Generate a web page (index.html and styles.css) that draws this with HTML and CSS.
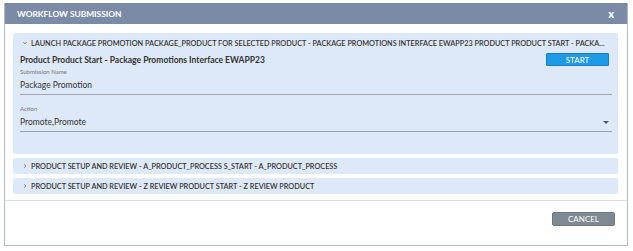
FILE: index.html
```html
<!DOCTYPE html>
<html>
<head>
<meta charset="utf-8">
<link rel="stylesheet" href="styles.css">
</head>
<body>
<div class="dialog">
  <div class="dlg-head">
    <span class="dlg-title">WORKFLOW SUBMISSION</span>
    <span class="dlg-close">x</span>
  </div>
  <div class="dlg-body">
    <div class="panel open">
      <div class="panel-head"><svg class="chev" viewBox="0 0 4 4" width="4" height="4"><path d="M0.5 1.2 L2 2.8 L3.5 1.2" fill="none" stroke="#555" stroke-width="0.8"/></svg><span class="panel-label">LAUNCH PACKAGE PROMOTION PACKAGE_PRODUCT FOR SELECTED PRODUCT - PACKAGE PROMOTIONS INTERFACE EWAPP23 PRODUCT PRODUCT START - PACKA...</span></div>
      <div class="panel-content">
        <div class="row-title">
          <span class="item-title">Product Product Start - Package Promotions Interface EWAPP23</span>
          <button class="btn-start">START</button>
        </div>
        <div class="field">
          <div class="field-label">Submission Name</div>
          <div class="field-value">Package Promotion</div>
        </div>
        <div class="field">
          <div class="field-label">Action</div>
          <div class="field-value select"><span>Promote,Promote</span><span class="caret"></span></div>
        </div>
      </div>
    </div>
    <div class="panel">
      <div class="panel-head"><svg class="chev" viewBox="0 0 4 4" width="4" height="4"><path d="M1.2 0.5 L2.8 2 L1.2 3.5" fill="none" stroke="#555" stroke-width="0.8"/></svg><span class="panel-label">PRODUCT SETUP AND REVIEW - A_PRODUCT_PROCESS S_START - A_PRODUCT_PROCESS</span></div>
    </div>
    <div class="panel">
      <div class="panel-head"><svg class="chev" viewBox="0 0 4 4" width="4" height="4"><path d="M1.2 0.5 L2.8 2 L1.2 3.5" fill="none" stroke="#555" stroke-width="0.8"/></svg><span class="panel-label">PRODUCT SETUP AND REVIEW - Z REVIEW PRODUCT START - Z REVIEW PRODUCT</span></div>
    </div>
  </div>
  <div class="dlg-foot">
    <button class="btn-cancel">CANCEL</button>
  </div>
</div>
</body>
</html>
```

FILE: styles.css
```css
* { box-sizing: border-box; }
html, body { margin: 0; padding: 0; background: #fff; }
body {
  font-family: Lato, "Open Sans", "Liberation Sans", sans-serif;
  color: #333;
  padding: 3px 5px 5px 4px;
}
.dialog {
  width: 624px;
  height: 243px;
  border: 1px solid #b4b8c0;
  border-top: none;
  display: flex;
  flex-direction: column;
  background: #fff;
}
.dlg-head {
  height: 21px;
  flex: none;
  background: #7b8ba7;
  display: flex;
  align-items: center;
  justify-content: space-between;
  padding: 0 13px 0 12px;
  color: #fff;
  font-weight: 700;
}
.dlg-title { font-size: 8.4px; }
.dlg-close { font-size: 11px; font-weight: 900; }
.dlg-body {
  padding: 9px 9px 6px 8px;
  display: flex;
  flex-direction: column;
  gap: 4px;
  border-bottom: 1px solid #dcdcdc;
}
.panel {
  background: #dde8f8;
  border-radius: 2px;
}
.panel-head {
  height: 16px;
  display: flex;
  align-items: center;
  padding-left: 10px;
  font-size: 7.3px;
  font-weight: 600;
  color: #333;
  white-space: nowrap;
  overflow: hidden;
}
.open .panel-head { height: 20px; }
.chev { flex: none; margin-right: 4px; }
.panel-content {
  padding: 0 6px 22px 7px;
}
.row-title {
  display: flex;
  align-items: center;
  justify-content: space-between;
  height: 13px;
}
.item-title { font-size: 8.5px; font-weight: 700; color: #333; }
.btn-start {
  width: 63px;
  height: 13px;
  background: #1e9ae6;
  border: 1px solid #1580c8;
  border-radius: 1px;
  color: #fff;
  font-family: inherit;
  font-size: 8px;
  padding: 0;
  margin-right: 3px;
}
.field { margin-top: 2px; }
.field + .field { margin-top: 10px; }
.field-label { font-size: 6px; color: #777; height: 8px; line-height: 8px; }
.field-value {
  font-size: 8.5px;
  color: #333;
  height: 19px;
  line-height: 14px;
  padding-top: 2px;
  border-bottom: 1px solid #a2a6ac;
}
.select { display: flex; justify-content: space-between; align-items: flex-start; }
.caret {
  width: 0; height: 0;
  margin-top: 6px;
  border-left: 3px solid transparent;
  border-right: 3px solid transparent;
  border-top: 3px solid #555;
  margin-right: 3px;
}
.dlg-foot {
  flex: 1;
  display: flex;
  justify-content: flex-end;
  align-items: flex-start;
  padding: 11px 12px 0 0;
}
.btn-cancel {
  width: 63px;
  height: 14px;
  background: #7f8993;
  border: 1px solid #6e7781;
  border-radius: 2px;
  color: #fff;
  font-family: inherit;
  font-size: 8px;
  padding: 0;
}
```
